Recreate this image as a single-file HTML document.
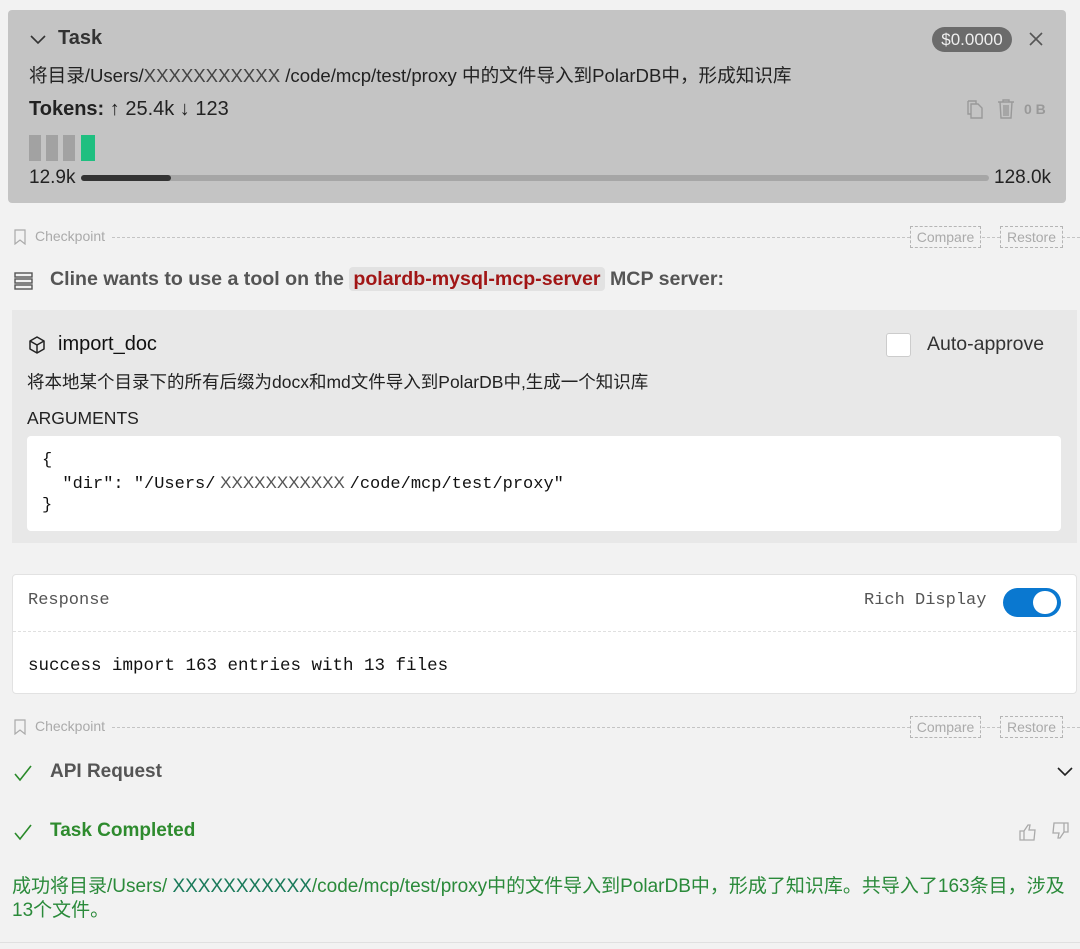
<!DOCTYPE html>
<html><head><meta charset="utf-8"><style>
*{margin:0;padding:0;box-sizing:border-box}
body{width:1080px;height:949px;background:#f2f2f2;font-family:"Liberation Sans","Noto Sans CJK SC",sans-serif;color:#222;position:relative;overflow:hidden}
.a{position:absolute;white-space:nowrap}
.mono{font-family:"Liberation Mono","DejaVu Sans Mono",monospace}
.dash{position:absolute;height:0;border-top:1px dashed #c4c4c4}
.cbtn{position:absolute;border:1px dashed #b5b5b5;color:#aaa;font-size:14px;text-align:center;line-height:20px;height:22px}
</style></head><body>
<div class="a" style="left:8px;top:10px;width:1058px;height:193px;background:#c4c4c4;border-radius:4px"></div>
<svg class="a" style="left:29px;top:32px" width="18" height="14" viewBox="0 0 18 14"><path d="M2 4 L9 11 L16 4" fill="none" stroke="#333" stroke-width="1.6"/></svg>
<div class="a" style="left:58px;top:27px;font-size:20px;font-weight:bold;color:#333">Task</div>
<div class="a" style="left:932px;top:27px;width:80px;height:25px;border-radius:13px;background:#6b6b6b;color:#eee;font-size:17px;text-align:center;line-height:25px">$0.0000</div>
<svg class="a" style="left:1028px;top:31px" width="16" height="16"><path d="M2 2 L14 14 M14 2 L2 14" stroke="#555" stroke-width="1.6"/></svg>
<div class="a" style="left:29px;top:61px;font-size:18.6px;color:#222">将目录/Users/<span style="color:#444">XXXXXXXXXXX</span> /code/mcp/test/proxy 中的文件导入到PolarDB中，形成知识库</div>
<div class="a" style="left:29px;top:98px;font-size:20px;color:#222"><b>Tokens:</b> ↑ 25.4k ↓ 123</div>
<svg class="a" style="left:964px;top:98px" width="22" height="22" viewBox="0 0 22 22"><path d="M4 3h8l0 3M4 3v13h3" fill="none" stroke="#999" stroke-width="1.4"/><path d="M7 6h7l4 4v10H7z" fill="none" stroke="#999" stroke-width="1.4"/></svg>
<svg class="a" style="left:996px;top:98px" width="20" height="22" viewBox="0 0 20 22"><path d="M2 4h16M7 4V2h6v2M4 4l1 16h10l1-16M8 7v11M10 7v11M12 7v11" fill="none" stroke="#999" stroke-width="1.4"/></svg>
<div class="a" style="left:1024px;top:101px;font-size:14px;font-weight:bold;color:#999">0 B</div>
<div class="a" style="left:29px;top:135px;width:12px;height:26px;background:#a2a2a2"></div>
<div class="a" style="left:46px;top:135px;width:12px;height:26px;background:#a2a2a2"></div>
<div class="a" style="left:63px;top:135px;width:12px;height:26px;background:#a2a2a2"></div>
<div class="a" style="left:81px;top:135px;width:14px;height:26px;background:#1fbf80"></div>
<div class="a" style="left:29px;top:167px;font-size:19px;color:#222">12.9k</div>
<div class="a" style="left:81px;top:175px;width:908px;height:6px;border-radius:3px;background:#a6a6a6"></div>
<div class="a" style="left:81px;top:175px;width:90px;height:6px;border-radius:3px;background:#333"></div>
<div class="a" style="left:994px;top:167px;font-size:19px;color:#222">128.0k</div>

<svg class="a" style="left:14px;top:229px" width="12" height="16" viewBox="0 0 12 16"><path d="M1 1h10v14l-5-4-5 4z" fill="none" stroke="#aaa" stroke-width="1.2"/></svg>
<div class="a" style="left:35px;top:228px;font-size:14px;color:#aaa">Checkpoint</div>
<div class="dash" style="left:112px;top:237px;width:968px"></div>
<div class="cbtn" style="left:910px;top:226px;width:71px;background:#f2f2f2">Compare</div>
<div class="cbtn" style="left:1000px;top:226px;width:63px;background:#f2f2f2">Restore</div>

<svg class="a" style="left:14px;top:271px" width="19" height="20" viewBox="0 0 19 20"><g fill="none" stroke="#555" stroke-width="1.4"><rect x="1" y="2" width="17" height="4"/><rect x="1" y="8" width="17" height="4"/><rect x="1" y="14" width="17" height="4"/></g></svg>
<div class="a" style="left:50px;top:268px;font-size:19.6px;font-weight:bold;color:#555">Cline wants to use a tool on the <span style="background:#e2e2e2;color:#a11515;border-radius:4px;padding:1px 4px">polardb-mysql-mcp-server</span> MCP server:</div>

<div class="a" style="left:12px;top:310px;width:1065px;height:233px;background:#e8e8e8"></div>
<svg class="a" style="left:27px;top:335px" width="20" height="20" viewBox="0 0 20 20"><g fill="none" stroke="#222" stroke-width="1.5" stroke-linejoin="round"><path d="M10 2l7 4v8l-7 4-7-4V6z"/><path d="M3 6l7 4 7-4M10 10v8"/></g></svg>
<div class="a" style="left:58px;top:333px;font-size:20px;color:#111">import_doc</div>
<div class="a" style="left:886px;top:333px;width:25px;height:24px;background:#fff;border:1px solid #ccc;border-radius:3px"></div>
<div class="a" style="left:927px;top:333px;font-size:19.5px;color:#333">Auto-approve</div>
<div class="a" style="left:27px;top:369px;font-size:17.5px;color:#222">将本地某个目录下的所有后缀为docx和md文件导入到PolarDB中,生成一个知识库</div>
<div class="a" style="left:27px;top:408px;font-size:17.5px;color:#222">ARGUMENTS</div>
<div class="a" style="left:27px;top:436px;width:1034px;height:95px;background:#fff;border-radius:4px"></div>
<div class="a mono" style="left:42px;top:450px;font-size:17px;line-height:21.5px;color:#111;white-space:pre">{
  "dir": "/Users/<span style="font-family:'Liberation Sans',sans-serif;color:#555"> XXXXXXXXXXX </span>/code/mcp/test/proxy"
}</div>

<div class="a" style="left:12px;top:574px;width:1065px;height:120px;background:#fff;border:1px solid #e2e2e2;border-radius:4px"></div>
<div class="a mono" style="left:28px;top:591px;font-size:17px;color:#555">Response</div>
<div class="a mono" style="left:864px;top:591px;font-size:17px;color:#555">Rich Display</div>
<div class="a" style="left:1003px;top:588px;width:58px;height:29px;border-radius:15px;background:#0a78d0"></div>
<div class="a" style="left:1033px;top:591px;width:24px;height:23px;border-radius:12px;background:#fff"></div>
<div class="dash" style="left:13px;top:631px;width:1063px;border-color:#e0e0e0"></div>
<div class="a mono" style="left:28px;top:656px;font-size:17.5px;color:#111">success import 163 entries with 13 files</div>

<svg class="a" style="left:14px;top:719px" width="12" height="16" viewBox="0 0 12 16"><path d="M1 1h10v14l-5-4-5 4z" fill="none" stroke="#aaa" stroke-width="1.2"/></svg>
<div class="a" style="left:35px;top:718px;font-size:14px;color:#aaa">Checkpoint</div>
<div class="dash" style="left:112px;top:727px;width:968px"></div>
<div class="cbtn" style="left:910px;top:716px;width:71px;background:#f2f2f2">Compare</div>
<div class="cbtn" style="left:1000px;top:716px;width:63px;background:#f2f2f2">Restore</div>

<svg class="a" style="left:13px;top:764px" width="20" height="18" viewBox="0 0 20 18"><path d="M2 10l5 6L18 2" fill="none" stroke="#2a8a2a" stroke-width="1.6"/></svg>
<div class="a" style="left:50px;top:761px;font-size:19px;font-weight:bold;color:#555">API Request</div>
<svg class="a" style="left:1057px;top:766px" width="16" height="12"><path d="M1 2l7 7 7-7" fill="none" stroke="#222" stroke-width="1.6"/></svg>

<svg class="a" style="left:13px;top:823px" width="20" height="18" viewBox="0 0 20 18"><path d="M2 10l5 6L18 2" fill="none" stroke="#2a8a2a" stroke-width="1.6"/></svg>
<div class="a" style="left:50px;top:820px;font-size:19px;font-weight:bold;color:#2e8b2e">Task Completed</div>
<svg class="a" style="left:1018px;top:823px" width="20" height="18" viewBox="0 0 20 18"><path d="M2 8h4v9H2zM6 8l4-6h2l-1 5h6l-1 10H6" fill="none" stroke="#aaa" stroke-width="1.3"/></svg>
<svg class="a" style="left:1050px;top:822px" width="20" height="18" viewBox="0 0 20 18"><path d="M18 10h-4V1h4zM14 10l-4 6H8l1-5H3L4 1h10" fill="none" stroke="#aaa" stroke-width="1.3"/></svg>
<div class="a" style="left:12px;top:875px;font-size:19px;line-height:24px;color:#2a8a3a">成功将目录/Users/ <span style="color:#1a7a5a">XXXXXXXXXXX</span>/code/mcp/test/proxy中的文件导入到PolarDB中，形成了知识库。共导入了163条目，涉及<br>13个文件。</div>
<div class="a" style="left:0;top:942px;width:1080px;height:1px;background:#e0e0e0"></div>
</body></html>
